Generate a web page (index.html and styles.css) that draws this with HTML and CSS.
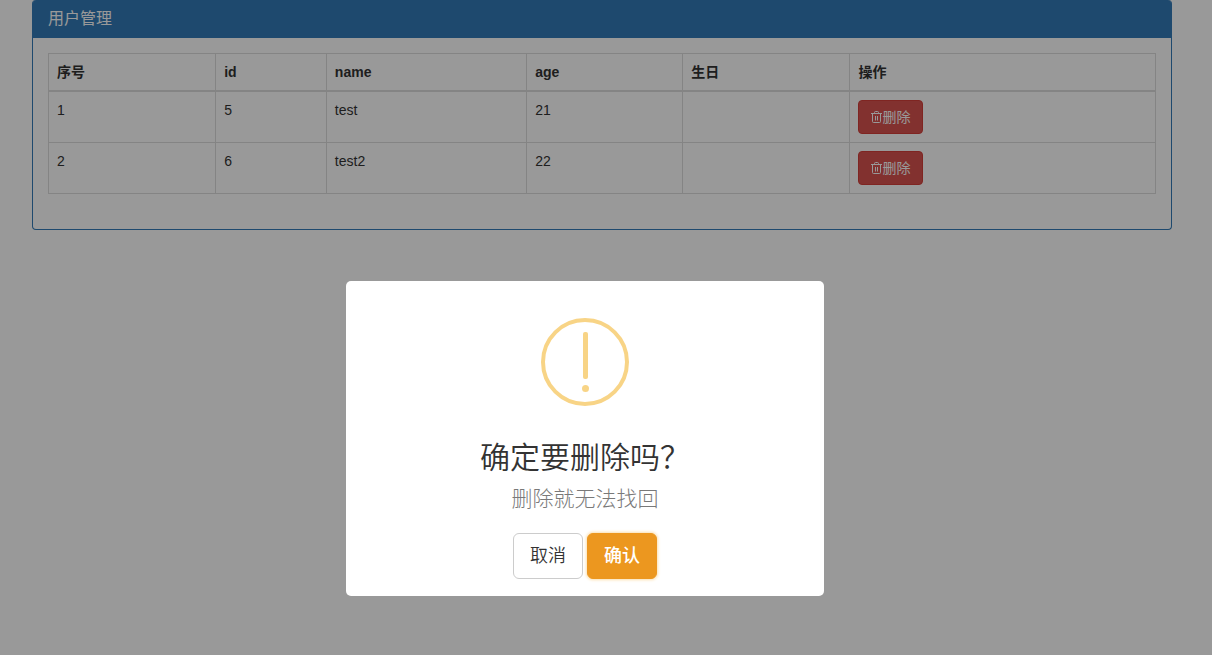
FILE: index.html
```
<!DOCTYPE html>
<html lang="zh-CN">
<head>
    <meta charset="UTF-8">
    <meta name="viewport" content="width=device-width, initial-scale=1.0">
    <title>用户管理</title>
    <link rel="stylesheet" href="styles.css">
</head>
<body>
    <div class="panel">
        <div class="panel-heading">
            <h3 class="panel-title">用户管理</h3>
        </div>
        <div class="panel-body">
            <table class="table">
                <colgroup>
                    <col class="col-no">
                    <col class="col-id">
                    <col class="col-name">
                    <col class="col-age">
                    <col class="col-birthday">
                    <col>
                </colgroup>
                <thead>
                    <tr>
                        <th>序号</th>
                        <th>id</th>
                        <th>name</th>
                        <th>age</th>
                        <th>生日</th>
                        <th>操作</th>
                    </tr>
                </thead>
                <tbody>
                    <tr>
                        <td>1</td>
                        <td>5</td>
                        <td>test</td>
                        <td>21</td>
                        <td></td>
                        <td>
                            <button type="button" class="btn btn-danger"><svg class="icon-trash" viewBox="0 0 11 12" aria-hidden="true"><path d="M0 2.5h11M3.5 2.5v-1q0-1 1-1h2q1 0 1 1v1M1.5 2.5v8q0 1 1 1h6q1 0 1-1v-8M4.5 5v4.5M6.5 5v4.5"/></svg>删除</button>
                        </td>
                    </tr>
                    <tr>
                        <td>2</td>
                        <td>6</td>
                        <td>test2</td>
                        <td>22</td>
                        <td></td>
                        <td>
                            <button type="button" class="btn btn-danger"><svg class="icon-trash" viewBox="0 0 11 12" aria-hidden="true"><path d="M0 2.5h11M3.5 2.5v-1q0-1 1-1h2q1 0 1 1v1M1.5 2.5v8q0 1 1 1h6q1 0 1-1v-8M4.5 5v4.5M6.5 5v4.5"/></svg>删除</button>
                        </td>
                    </tr>
                </tbody>
            </table>
        </div>
    </div>

    <div class="overlay"></div>

    <div class="alert" role="alertdialog" aria-labelledby="alertTitle" aria-describedby="alertText">
        <svg class="alert-icon" viewBox="0 0 88 88" aria-hidden="true">
            <circle class="ring" cx="44" cy="44" r="42"/>
            <rect x="42" y="14" width="5" height="47" rx="2"/>
            <circle cx="44.5" cy="70.5" r="3.5"/>
        </svg>
        <h2 id="alertTitle">确定要删除吗？</h2>
        <p class="lead" id="alertText">删除就无法找回</p>
        <div class="alert-buttons">
            <button type="button" class="btn btn-lg btn-default">取消</button>
            <button type="button" class="btn btn-lg btn-warning">确认</button>
        </div>
    </div>
</body>
</html>
```
FILE: styles.css
```
* {
    box-sizing: border-box;
}

body {
    margin: 0;
    background-color: #fff;
    color: #333;
    font-family: "Liberation Sans", "Noto Sans CJK SC", sans-serif;
    font-size: 14px;
    line-height: 20px;
}

.panel {
    margin: 0 40px 20px 32px;
    border: 1px solid #337ab7;
    border-top: none;
    border-radius: 4px;
}

.panel-heading {
    padding: 9px 15px;
    background-color: #337ab7;
    border-radius: 3px 3px 0 0;
    color: #fff;
}

.panel-title {
    margin: 0;
    font-size: 16px;
    font-weight: 400;
    line-height: 20px;
}

.panel-body {
    padding: 15px;
}

.table {
    width: 100%;
    margin-bottom: 20px;
    border: 1px solid #ddd;
    border-collapse: collapse;
    table-layout: fixed;
}

.col-no,
.col-birthday {
    width: 15.1%;
}

.col-id {
    width: 10%;
}

.col-name {
    width: 18.1%;
}

.col-age {
    width: 14.1%;
}

.table th,
.table td {
    padding: 8px;
    border: 1px solid #ddd;
    text-align: left;
    vertical-align: top;
}

.table th {
    border-bottom-width: 2px;
    font-weight: 700;
}

.btn {
    display: inline-flex;
    align-items: center;
    justify-content: center;
    padding: 6px 12px;
    border: 1px solid transparent;
    border-radius: 4px;
    font-family: inherit;
    font-size: 14px;
    line-height: 20px;
    cursor: pointer;
}

.table .btn {
    display: flex;
}

.btn-danger {
    background-color: #d9534f;
    border-color: #d43f3a;
    color: #fff;
}

.icon-trash {
    width: 11px;
    height: 12px;
    fill: none;
    stroke: currentColor;
}

.overlay {
    position: fixed;
    inset: 0;
    background-color: rgba(0, 0, 0, 0.4);
}

.alert {
    position: fixed;
    top: 281px;
    left: 50%;
    width: 478px;
    margin-left: -260px;
    padding: 37px 17px 17px;
    background-color: #fff;
    border-radius: 5px;
    text-align: center;
}

.alert-icon {
    display: block;
    width: 88px;
    height: 88px;
    margin: 0 auto 35px;
    fill: #f8d486;
}

.alert-icon .ring {
    fill: none;
    stroke: #f8d486;
    stroke-width: 4;
}

.alert h2 {
    margin: 0 0 9px;
    font-size: 30px;
    font-weight: 350;
    line-height: 34px;
}

.lead {
    margin: 0 0 19px;
    color: #797979;
    font-size: 21px;
    font-weight: 300;
    line-height: 30px;
}

.alert-buttons {
    display: flex;
    justify-content: center;
    gap: 4px;
}

.btn-lg {
    padding: 10px 16px;
    border-radius: 6px;
    font-size: 18px;
    line-height: 24px;
}

.btn-default {
    background-color: #fff;
    border-color: #ccc;
    color: #333;
    font-weight: 350;
}

.btn-warning {
    background-color: #ec971f;
    border-color: #ec971f;
    color: #fff;
    font-weight: 500;
    box-shadow: 0 0 3px 1px #fbdfae;
}
```
